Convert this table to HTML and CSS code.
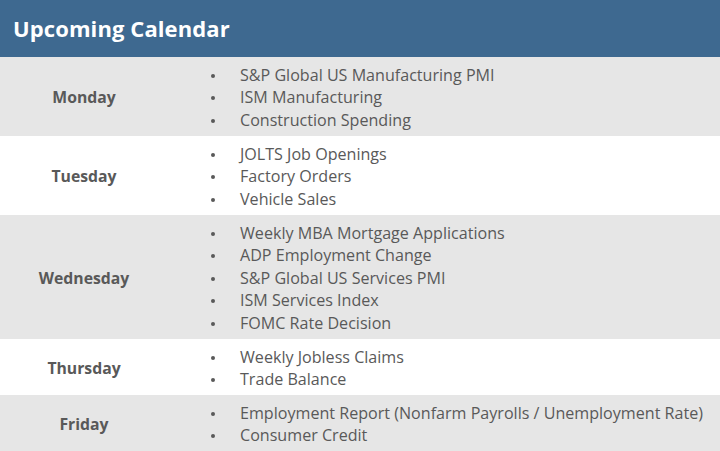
FILE: index.html
```html
<!DOCTYPE html>
<html>
<head>
<meta charset="utf-8">
<link rel="stylesheet" href="styles.css">
</head>
<body>
<div class="page">
  <div class="header"><h1 class="title">Upcoming Calendar</h1></div>
  <div class="row shade h3">
    <div class="day">Monday</div>
    <ul class="items">
      <li>S&amp;P Global US Manufacturing PMI</li>
      <li>ISM Manufacturing</li>
      <li>Construction Spending</li>
    </ul>
  </div>
  <div class="row h3">
    <div class="day">Tuesday</div>
    <ul class="items">
      <li>JOLTS Job Openings</li>
      <li>Factory Orders</li>
      <li>Vehicle Sales</li>
    </ul>
  </div>
  <div class="row shade h5">
    <div class="day">Wednesday</div>
    <ul class="items">
      <li>Weekly MBA Mortgage Applications</li>
      <li>ADP Employment Change</li>
      <li>S&amp;P Global US Services PMI</li>
      <li>ISM Services Index</li>
      <li>FOMC Rate Decision</li>
    </ul>
  </div>
  <div class="row h2">
    <div class="day">Thursday</div>
    <ul class="items">
      <li>Weekly Jobless Claims</li>
      <li>Trade Balance</li>
    </ul>
  </div>
  <div class="row shade h2">
    <div class="day">Friday</div>
    <ul class="items">
      <li>Employment Report (Nonfarm Payrolls / Unemployment Rate)</li>
      <li>Consumer Credit</li>
    </ul>
  </div>
</div>
</body>
</html>
```
FILE: styles.css
```css
html, body {
  margin: 0;
  padding: 0;
  background: #e6e6e6;
}
.page {
  width: 720px;
  font-family: "Open Sans", "DejaVu Sans", sans-serif;
  color: #595959;
}
.header {
  background: #3e6990;
  height: 57px;
  display: flex;
  align-items: center;
  padding-left: 13px;
  box-sizing: border-box;
}
.title {
  margin: 0;
  color: #ffffff;
  font-size: 22px;
  font-weight: 700;
  letter-spacing: 0.1px;
  line-height: 1;
  padding-bottom: 2px;
}
.row {
  display: flex;
  align-items: center;
  background: #ffffff;
}
.row.shade {
  background: #e6e6e6;
}
.row.h3 { height: 79px; }
.row.h5 { height: 124px; }
.row.h2 { height: 56px; }
.day {
  width: 168px;
  text-align: center;
  font-weight: 700;
  font-size: 15.75px;
  padding-top: 1px;
}
.items {
  list-style: none;
  margin: 0;
  padding: 2px 0 0 42px;
  font-size: 16.1px;
  line-height: 22.5px;
}
.items li {
  position: relative;
  padding-left: 30px;
}
.items li::before {
  content: "";
  position: absolute;
  left: 1px;
  top: 10px;
  width: 4px;
  height: 4px;
  border-radius: 50%;
  background: #595959;
}
```
